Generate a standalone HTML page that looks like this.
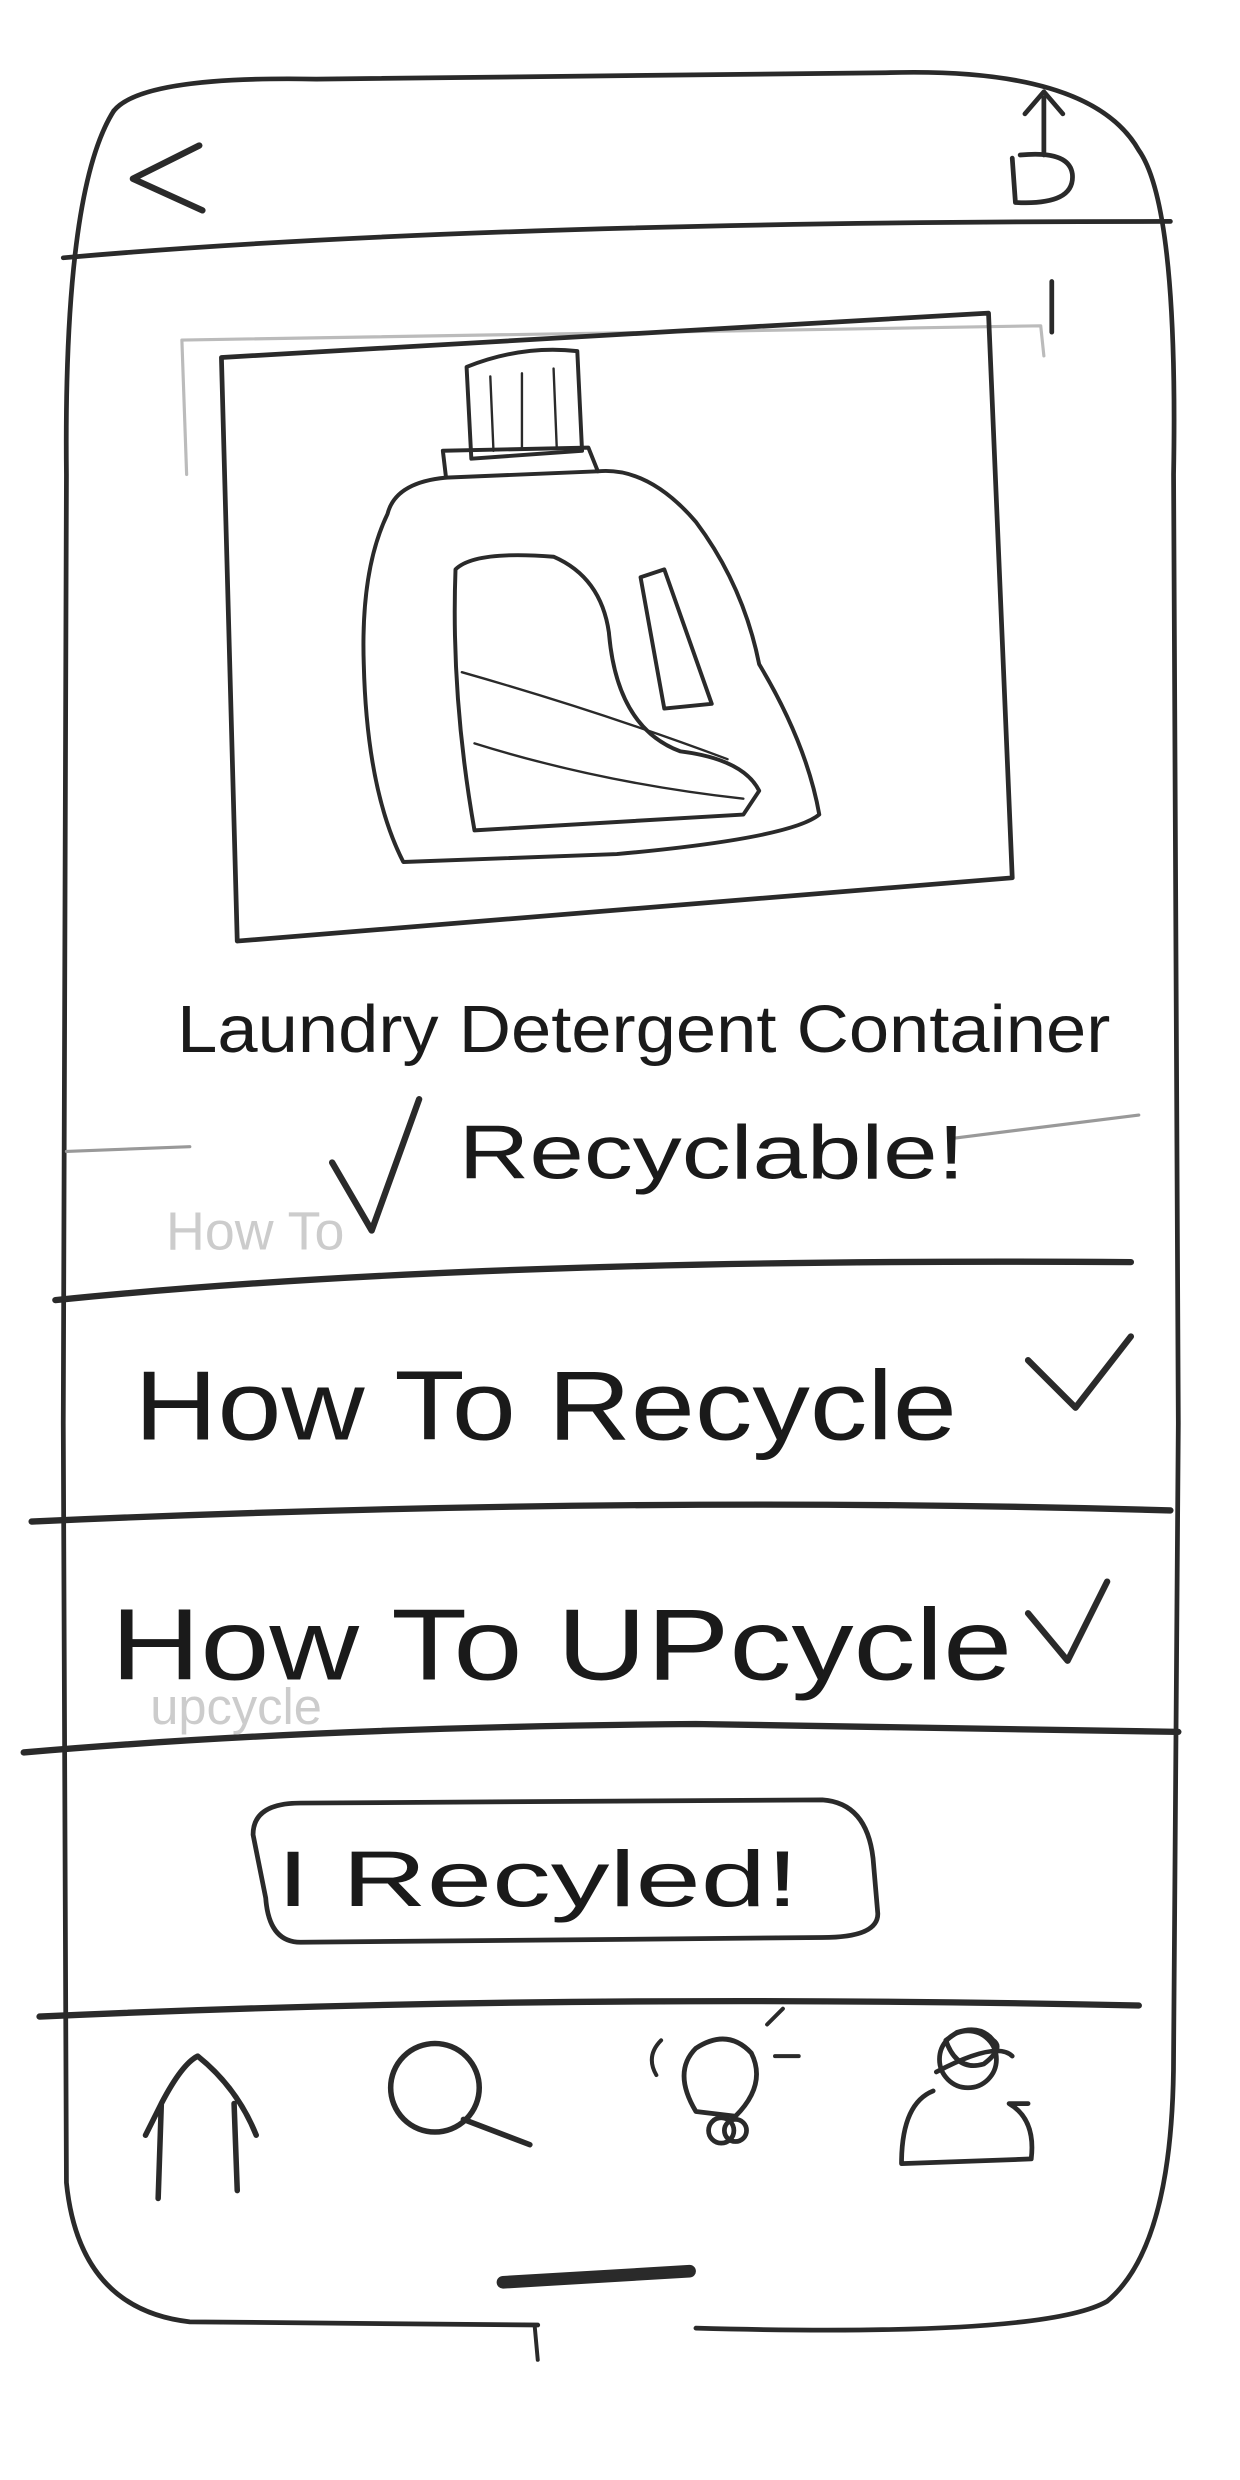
<!DOCTYPE html>
<html><head><meta charset="utf-8"><style>
html,body{margin:0;padding:0;background:#fff;}
svg{display:block}
text{font-family:"Liberation Sans",sans-serif;fill:#1a1a1a}
</style></head><body>
<svg width="1240" height="2480" viewBox="0 0 784 1568" xmlns="http://www.w3.org/2000/svg">
<g fill="none" stroke="#2a2a2a" stroke-linecap="round" stroke-linejoin="round">
<!-- phone outline -->
<path d="M72 70 Q90 48 200 50 L560 46 Q690 42 720 95 Q745 130 742 300 L745 900 L742 1300 Q742 1420 700 1455 Q660 1478 440 1472" stroke-width="3"/>
<path d="M340 1470 L120 1468 Q50 1460 42 1380 L40 900 L42 300 Q40 120 72 70" stroke-width="3"/>
<path d="M338 1470 L340 1492" stroke-width="2.5"/>
<!-- header -->
<path d="M126 92 L84 113 L128 133" stroke-width="4"/>
<path d="M640 100 L642 128 Q680 130 678 110 Q676 95 645 98" stroke-width="3"/>
<path d="M660 98 L660 62 M648 72 L660 58 L672 72" stroke-width="3"/>
<path d="M40 163 Q300 140 740 140" stroke-width="3"/>
<path d="M665 178 L665 210" stroke-width="3"/>
<!-- image frame -->
<path d="M115 215 L658 206 L660 225 M115 215 L118 300" stroke="#bbb" stroke-width="2"/>
<path d="M140 226 L625 198 L640 555 L150 595 Z" stroke-width="3"/>
<!-- bottle -->
<path d="M295 232 Q330 218 365 222 L368 285 L298 290 Z" stroke-width="2.5"/>
<path d="M310 238 L312 285 M330 236 L330 283 M350 233 L352 283" stroke-width="1.5"/>
<path d="M280 285 L372 283 L378 298 L282 302 Z" stroke-width="2.5"/>
<path d="M282 302 Q250 305 245 325 Q228 360 230 420 Q232 500 255 545 L390 540 Q500 530 518 515 Q510 470 480 420 Q470 370 440 330 Q410 295 378 298" stroke-width="2.5"/>
<path d="M288 360 Q300 348 350 352 Q380 365 385 400 Q390 460 430 475 Q470 480 480 500 L470 515 L300 525 Q285 440 288 360 Z" stroke-width="2.5"/>
<path d="M405 365 L420 360 L450 445 L420 448 Z" stroke-width="2.5"/>
<path d="M292 425 Q380 450 460 480 M300 470 Q380 495 470 505" stroke-width="1.5"/>
<!-- lines -->
<path d="M42 728 L120 725 M600 720 L720 705" stroke="#999" stroke-width="2"/>
<path d="M35 822 Q300 795 715 798" stroke-width="4"/>
<path d="M20 962 Q400 945 740 955" stroke-width="4"/>
<path d="M15 1108 Q200 1092 440 1090 L745 1095" stroke-width="4"/>
<path d="M25 1275 Q350 1260 720 1268" stroke-width="4"/>
<!-- checks -->
<path d="M210 735 L235 778 L265 695" stroke-width="4"/>
<path d="M650 860 L680 890 L715 845" stroke-width="4"/>
<path d="M650 1020 L675 1050 L700 1000" stroke-width="4"/>
<!-- button -->
<path d="M160 1160 Q160 1140 190 1140 L520 1138 Q548 1140 552 1175 L555 1210 Q555 1225 520 1225 L190 1228 Q170 1228 168 1200 Z" stroke-width="3"/>
<!-- nav icons -->
<path d="M100 1390 L102 1330 L92 1350 M102 1330 Q115 1305 125 1300 Q150 1320 162 1350 M148 1330 L150 1385" stroke-width="3.5"/>
<circle cx="275" cy="1320" r="28" stroke-width="3.5"/>
<path d="M293 1340 L335 1356" stroke-width="3.5"/>
<path d="M440 1335 Q425 1310 440 1295 Q460 1282 475 1298 Q485 1318 465 1338 Z" stroke-width="3"/>
<circle cx="456" cy="1347" r="8" stroke-width="3"/>
<circle cx="465" cy="1347" r="7" stroke-width="3"/>
<path d="M418 1290 Q408 1300 415 1312 M485 1280 L495 1270 M490 1300 L505 1300" stroke-width="2.5"/>
<path d="M598 1290 Q605 1310 622 1305 Q635 1295 628 1290 Q620 1280 605 1285 Z M592 1310 Q630 1290 640 1300" stroke-width="3"/>
<circle cx="612" cy="1302" r="18" stroke-width="3"/>
<path d="M590 1322 Q570 1330 570 1368 L652 1365 Q655 1340 638 1330 L650 1330" stroke-width="3"/>
<!-- home bar -->
<path d="M318 1443 L436 1436" stroke-width="8"/>
</g>
<text x="112" y="665" font-size="42" textLength="590" lengthAdjust="spacingAndGlyphs">Laundry Detergent Container</text>
<text x="290" y="745" font-size="48" textLength="320" lengthAdjust="spacingAndGlyphs">Recyclable!</text>
<text x="105" y="790" font-size="34" fill="#ccc" style="fill:#ccc">How To</text>
<text x="85" y="910" font-size="62" textLength="520" lengthAdjust="spacingAndGlyphs">How To Recycle</text>
<text x="70" y="1062" font-size="64" textLength="570" lengthAdjust="spacingAndGlyphs">How To UPcycle</text>
<text x="95" y="1090" font-size="32" style="fill:#ccc">upcycle</text>
<text x="175" y="1205" font-size="50" textLength="330" lengthAdjust="spacingAndGlyphs">I Recyled!</text>
</svg>
</body></html>
